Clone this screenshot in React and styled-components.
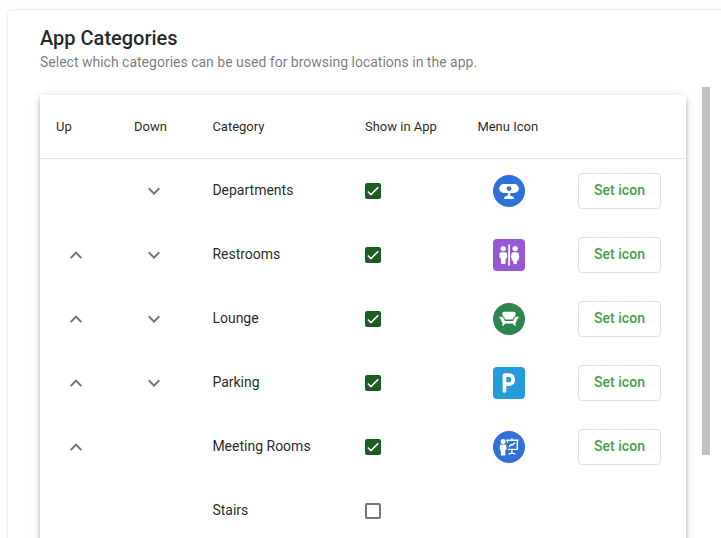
import React from "react";
import styled, { createGlobalStyle } from "styled-components";

const GlobalStyle = createGlobalStyle`
  * { box-sizing: border-box; }
  html, body { margin: 0; height: 538px; overflow: hidden; background: #fefefe; }
  body { font-family: Roboto, "Liberation Sans", sans-serif; color: rgba(0, 0, 0, 0.87); }
`;

const Page = styled.main`
  height: 538px;
  padding: 10px 0 0 8px;
  overflow: hidden;
`;

const Panel = styled.section`
  display: flex;
  flex-direction: column;
  width: 760px;
  height: 600px;
  padding: 16px 0 0 32px;
  background: #fff;
  border-radius: 4px;
  box-shadow: 0 0 2px rgba(0, 0, 0, 0.22);
`;

const Title = styled.h1`
  flex: none;
  margin: 0;
  font-size: 20px;
  line-height: 24px;
  font-weight: 500;
`;

const Subtitle = styled.p`
  flex: none;
  margin: 0;
  height: 37px;
  font-size: 14px;
  line-height: 24px;
  color: rgba(0, 0, 0, 0.54);
`;

const ScrollArea = styled.div`
  display: flex;
  gap: 16px;
  width: 670px;
`;

const Table = styled.div`
  width: 646px;
  height: 500px;
  margin-top: 8px;
  background: #fff;
  box-shadow: 0 2px 4px -1px rgba(0, 0, 0, 0.2), 0 4px 5px rgba(0, 0, 0, 0.14),
    0 1px 10px rgba(0, 0, 0, 0.12);
`;

const Scrollbar = styled.div`
  width: 8px;
  height: 368px;
  background: #c1c1c1;
`;

const Row = styled.div`
  display: grid;
  grid-template-columns: 78px 78.4px 152.6px 112.4px 100.6px 83px;
  align-items: center;
  height: 64px;
  padding-left: 16px;
`;

const HeaderRow = styled(Row)`
  border-bottom: 1px solid #e8e8e8;
  font-size: 13px;
  white-space: nowrap;
`;

const Name = styled.span`
  font-size: 14px;
  line-height: 20px;
  padding-bottom: 2px;
`;

const ArrowCell = styled.span`
  display: flex;
  padding-left: 8px;
`;

const CheckCell = styled.span`
  display: flex;
`;

const Checkbox = styled.span`
  display: flex;
  width: 16px;
  height: 16px;
  border-radius: 2px;
  border: ${(p) => (p.$checked ? "0" : "2px solid #757575")};
  background: ${(p) => (p.$checked ? "#1b5e20" : "#fff")};
`;

const IconCell = styled.span`
  display: flex;
  padding-left: 15.6px;
`;

const Badge = styled.svg`
  width: 32px;
  height: 32px;
  background: ${(p) => p.$color};
  border-radius: ${(p) => (p.$round ? "50%" : "4px")};
`;

const SetIconButton = styled.button`
  width: 83px;
  height: 36px;
  padding: 0 0 2px;
  border: 1px solid #e0e0e0;
  border-radius: 4px;
  background: #fff;
  color: #43a047;
  font: 500 14px/32px Roboto, "Liberation Sans", sans-serif;
  letter-spacing: 0.05px;
`;

function Arrow({ up }) {
  return (
    <svg width="24" height="24" viewBox="0 0 24 24" fill="#757575" aria-hidden="true">
      <path d={up
        ? "M12 8.3l-6 6 1.4 1.4 4.6-4.6 4.6 4.6 1.4-1.4z"
        : "M16.6 8.6L12 13.2 7.4 8.6 6 10l6 6 6-6z"} />
    </svg>
  );
}

const glyphs = {
  departments: (
    <>
      <path fill="#fff" d="M10.6 9.1h10.8a4.4 4.4 0 0 1 0 8.8h-4.2v2.8q3.7.2 4 3.2H10.8q.3-3 4-3.2v-2.8h-4.2a4.4 4.4 0 0 1 0-8.8z" />
      <circle cx="16" cy="13.6" r="2.3" fill="#2f70d9" />
    </>
  ),
  restrooms: (
    <>
      <rect x="15.2" y="5.3" width="1.8" height="21.4" rx=".6" fill="#fff" />
      <circle cx="10.2" cy="9.6" r="2.7" fill="#fff" />
      <circle cx="22.1" cy="9.6" r="2.7" fill="#fff" />
      <path fill="#fff" d="M8.2 13.2h4q1.9 0 1.9 1.9v2.8q0 1.4-1.5 1.8v4.3q0 1-1 1H8.9q-1 0-1-1v-4.3q-1.5-.4-1.5-1.8v-2.8q0-1.9 1.8-1.9z" />
      <path fill="#fff" d="M20.2 13.2h3.8q1.4 0 1.7 1.5l.6 3.3q.1 1.2-1 1.5l.4 1.9h-1.8V24q0 1-1 1h-1.6q-1 0-1-1v-2.6h-1.8l.4-1.9q-1.1-.3-1-1.5l.6-3.3q.3-1.5 1.7-1.5z" />
    </>
  ),
  lounge: (
    <>
      <path fill="#fff" d="M11.1 8.8h9.8q1.7 0 1.9 1.6-.1 2.4-1.9 3.9l-1.3 2.3h-7.2l-1.3-2.3q-1.8-1.5-1.9-3.9.2-1.6 1.9-1.6z" />
      <path fill="none" stroke="#fff" strokeWidth="2" strokeLinecap="round" strokeLinejoin="round" d="M7.4 14.6l2.2.7 1.6 3.6h9.6l1.6-3.6 2.2-.7M8.7 16.2l1.3 3M23.3 16.2l-1.3 3" />
      <path fill="#fff" d="M9.3 18.6h13.4l-.5 1.6.6 2.6h-1.3l-1.7-2.3h-7.6l-1.7 2.3H9.2l.6-2.6z" />
    </>
  ),
  parking: (
    <path fill="none" stroke="#fff" strokeWidth="3.7" strokeLinecap="round" strokeLinejoin="round" d="M11.5 24V8.1h4.7q4 .2 4 4.5t-4 4.5h-4.7" />
  ),
  meeting: (
    <>
      <circle cx="10.1" cy="10.4" r="2.5" fill="#fff" />
      <path fill="#fff" d="M8.2 13.5h4q1.3.2 1.3 1.7v2.6q0 1.2-1.2 1.5v4.4q0 .9-.9.9H8.7q-.9 0-.9-.9v-4.4q-1.1-.3-1.1-1.5v-2.6q0-1.5 1.5-1.7z" />
      <path fill="none" stroke="#fff" strokeWidth="1.4" strokeLinecap="round" strokeLinejoin="round" d="M13.6 9.2h11.6M19 7.7v1.5M14.5 9.2v1.9M24.3 9.2v9.2H15.6M18.9 18.4v3.7M16 23.1l2.9-1.2 3 1.2M16.3 15.6l1.6-1.9 1.6.3 2.1-2.1" />
    </>
  ),
};

const categories = [
  { name: "Departments", down: true, glyph: "departments", color: "#2f70d9", round: true },
  { name: "Restrooms", up: true, down: true, glyph: "restrooms", color: "#9557d4" },
  { name: "Lounge", up: true, down: true, glyph: "lounge", color: "#2c864e", round: true },
  { name: "Parking", up: true, down: true, glyph: "parking", color: "#259bdb" },
  { name: "Meeting Rooms", up: true, glyph: "meeting", color: "#2f70d9", round: true },
  { name: "Stairs" },
];

function CategoryRow({ category }) {
  const { name, up, down, glyph, color, round } = category;
  return (
    <Row>
      <ArrowCell>{up && <Arrow up />}</ArrowCell>
      <ArrowCell>{down && <Arrow />}</ArrowCell>
      <Name>{name}</Name>
      <CheckCell>
        <Checkbox $checked={!!glyph} role="checkbox" aria-checked={!!glyph}>
          {glyph && (
            <svg width="16" height="16" viewBox="0 0 16 16" fill="none" stroke="#fff" strokeWidth="1.45">
              <path d="M2.8 8.4l3.1 3.2 7.4-7.4" />
            </svg>
          )}
        </Checkbox>
      </CheckCell>
      <IconCell>
        {glyph && (
          <Badge viewBox="0 0 32 32" $color={color} $round={round} aria-hidden="true">
            {glyphs[glyph]}
          </Badge>
        )}
      </IconCell>
      {glyph && <SetIconButton>Set icon</SetIconButton>}
    </Row>
  );
}

export default function App() {
  return (
    <Page>
      <GlobalStyle />
      <Panel>
        <Title>App Categories</Title>
        <Subtitle>Select which categories can be used for browsing locations in the app.</Subtitle>
        <ScrollArea>
          <Table>
            <HeaderRow>
              <span>Up</span>
              <span>Down</span>
              <span>Category</span>
              <span>Show in App</span>
              <span>Menu Icon</span>
            </HeaderRow>
            {categories.map((category) => (
              <CategoryRow key={category.name} category={category} />
            ))}
          </Table>
          <Scrollbar />
        </ScrollArea>
      </Panel>
    </Page>
  );
}
